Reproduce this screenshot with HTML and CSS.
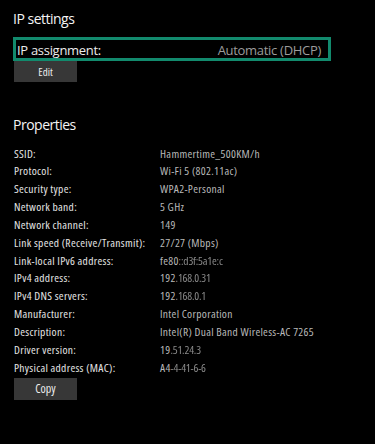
FILE: index.html
```html
<!DOCTYPE html>
<html>
<head>
<meta charset="utf-8">
<link rel="stylesheet" href="styles.css">
</head>
<body>
<div class="page">
  <h2 class="title">IP settings</h2>
  <div class="assign">
    <span class="assign-label">IP assignment:</span>
    <span class="assign-value">Automatic (DHCP)</span>
  </div>
  <button class="btn btn-edit">Edit</button>

  <h2 class="title props-title">Properties</h2>
  <dl class="props">
    <dt>SSID:</dt><dd>Hammertime_500KM/h</dd>
    <dt>Protocol:</dt><dd>Wi-Fi 5 (802.11ac)</dd>
    <dt>Security type:</dt><dd>WPA2-Personal</dd>
    <dt>Network band:</dt><dd>5 GHz</dd>
    <dt>Network channel:</dt><dd>149</dd>
    <dt>Link speed (Receive/Transmit):</dt><dd>27/27 (Mbps)</dd>
    <dt>Link-local IPv6 address:</dt><dd>fe80<span class="blur">::d3f:5a1e:c</span></dd>
    <dt>IPv4 address:</dt><dd>192<span class="blur">.168.0.31</span></dd>
    <dt>IPv4 DNS servers:</dt><dd>192<span class="blur">.168.0.1</span></dd>
    <dt>Manufacturer:</dt><dd>Intel Corporation</dd>
    <dt>Description:</dt><dd>Intel(R) Dual Band Wireless-AC 7265</dd>
    <dt>Driver version:</dt><dd>19<span class="blur">.51.24.3</span></dd>
    <dt>Physical address (MAC):</dt><dd>A4<span class="blur">-4-41-6-6</span></dd>
  </dl>
  <button class="btn btn-copy">Copy</button>
</div>
</body>
</html>
```
FILE: styles.css
```css
html, body {
  margin: 0;
  padding: 0;
  background: #000;
}
body {
  font-family: "Open Sans", "Noto Sans", sans-serif;
  color: #fff;
}
.page {
  padding: 8.5px 0 0 13px;
  display: flex;
  flex-direction: column;
  align-items: flex-start;
}
.title {
  margin: 0;
  font-size: 14px;
  font-weight: 400;
  letter-spacing: -0.5px;
  line-height: 20px;
  color: #f4f4f4;
}
.assign {
  margin-top: 8.5px;
  width: 304px;
  height: 16px;
  border: 3px solid #128a6d;
  display: flex;
  justify-content: space-between;
  padding: 2px 7px 0 1px;
  font-size: 13px;
  letter-spacing: -0.3px;
  line-height: 16px;
  white-space: nowrap;
}
.assign-label { color: #ededed; }
.assign-value { color: #9c9c9c; }
.btn {
  margin-left: 1px;
  width: 63px;
  height: 21px;
  border: none;
  background: #373737;
  color: #ececec;
  font-family: "Open Sans", "Noto Sans", sans-serif;
  font-size: 11px;
  font-stretch: 75%;
  padding: 0;
}
.props-title {
  margin-top: 32.6px;
}
.props {
  margin: 10px 0 0 1px;
  display: grid;
  grid-template-columns: 146px auto;
  font-size: 11.5px;
  font-stretch: 75%;
  letter-spacing: 0.3px;
  line-height: 17.83px;
  white-space: nowrap;
}
.props dt { color: #e4e4e4; }
.props dd { margin: 0; color: #b8b8b8; }
.blur { color: #8a8a8a; filter: blur(0.4px); letter-spacing: -0.2px; }
.btn-copy {
  margin-top: 1.5px;
  height: 22px;
  font-size: 12px;
}
```
